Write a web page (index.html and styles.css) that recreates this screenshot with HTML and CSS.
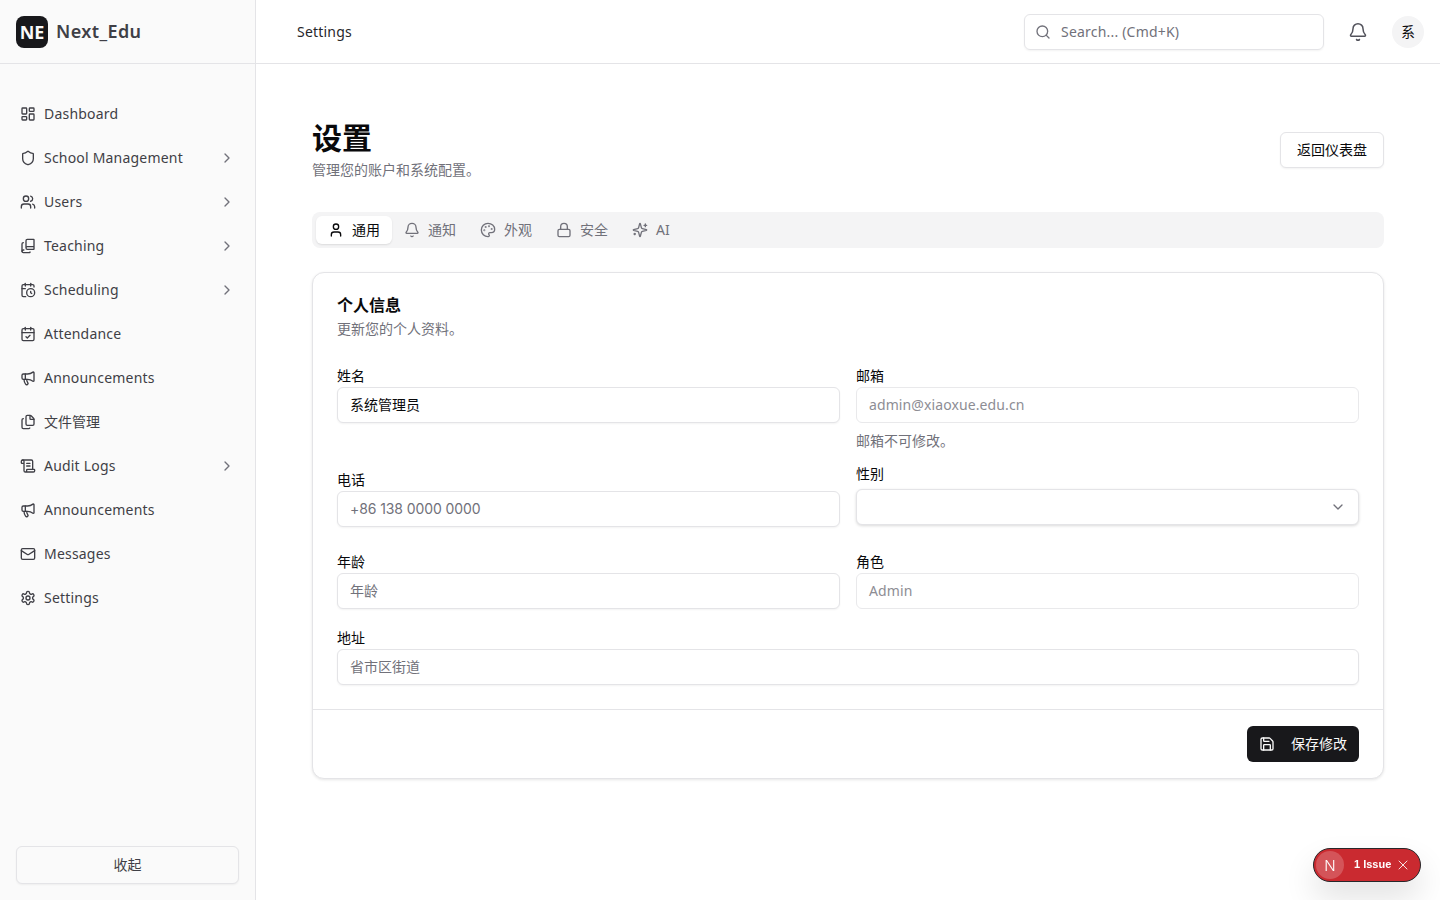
FILE: index.html
```html
<!DOCTYPE html>
<html lang="zh-CN">
<head>
<meta charset="utf-8">
<title>Settings</title>
<link rel="stylesheet" href="styles.css">
</head>
<body>
<svg class="defs" aria-hidden="true">
  <symbol id="i-dash" viewBox="0 0 24 24"><rect x="3" y="3" width="7" height="9" rx="1"/><rect x="14" y="3" width="7" height="5" rx="1"/><rect x="14" y="12" width="7" height="9" rx="1"/><rect x="3" y="16" width="7" height="5" rx="1"/></symbol>
  <symbol id="i-shield" viewBox="0 0 24 24"><path d="M20 13c0 5-3.5 7.5-7.66 8.95a1 1 0 0 1-.67-.01C7.5 20.5 4 18 4 13V6a1 1 0 0 1 1-1c2 0 4.5-1.2 6.24-2.72a1.17 1.17 0 0 1 1.52 0C14.51 3.81 17 5 19 5a1 1 0 0 1 1 1z"/></symbol>
  <symbol id="i-users" viewBox="0 0 24 24"><path d="M16 21v-2a4 4 0 0 0-4-4H6a4 4 0 0 0-4 4v2"/><circle cx="9" cy="7" r="4"/><path d="M22 21v-2a4 4 0 0 0-3-3.87"/><path d="M16 3.13a4 4 0 0 1 0 7.75"/></symbol>
  <symbol id="i-book" viewBox="0 0 24 24"><path d="M5 7a2 2 0 0 0-2 2v11"/><path d="M5.803 18H5a2 2 0 0 0 0 4h9.5a.5.5 0 0 0 .5-.5V21"/><path d="M9 15V4a2 2 0 0 1 2-2h9.5a.5.5 0 0 1 .5.5v14a.5.5 0 0 1-.5.5H11a2 2 0 0 1 0-4h10"/></symbol>
  <symbol id="i-calclock" viewBox="0 0 24 24"><path d="M16 14v2.2l1.6 1"/><path d="M16 2v4"/><path d="M21 7.5V6a2 2 0 0 0-2-2H5a2 2 0 0 0-2 2v14a2 2 0 0 0 2 2h3.5"/><path d="M3 10h5"/><path d="M8 2v4"/><circle cx="16" cy="16" r="6"/></symbol>
  <symbol id="i-calcheck" viewBox="0 0 24 24"><path d="M8 2v4"/><path d="M16 2v4"/><rect x="3" y="4" width="18" height="18" rx="2"/><path d="M3 10h18"/><path d="m9 16 2 2 4-4"/></symbol>
  <symbol id="i-mega" viewBox="0 0 24 24"><path d="M11 6a13 13 0 0 0 8.4-2.8A1 1 0 0 1 21 4v12a1 1 0 0 1-1.6.8A13 13 0 0 0 11 14H5a2 2 0 0 1-2-2V8a2 2 0 0 1 2-2z"/><path d="M6 14a12 12 0 0 0 2.4 7.2 2 2 0 0 0 3.2-2.4A8 8 0 0 1 10 14"/><path d="M8 6v8"/></symbol>
  <symbol id="i-files" viewBox="0 0 24 24"><path d="M15 2h-4a2 2 0 0 0-2 2v11a2 2 0 0 0 2 2h8a2 2 0 0 0 2-2V8"/><path d="M16.706 2.706A2.4 2.4 0 0 0 15 2v5a1 1 0 0 0 1 1h5a2.4 2.4 0 0 0-.706-1.706z"/><path d="M5 7a2 2 0 0 0-2 2v11a2 2 0 0 0 2 2h8a2 2 0 0 0 1.732-1"/></symbol>
  <symbol id="i-scroll" viewBox="0 0 24 24"><path d="M15 12h-5"/><path d="M15 8h-5"/><path d="M19 17V5a2 2 0 0 0-2-2H4"/><path d="M8 21h12a2 2 0 0 0 2-2v-1a1 1 0 0 0-1-1H11a1 1 0 0 0-1 1v1a2 2 0 1 1-4 0V5a2 2 0 1 0-4 0v2a1 1 0 0 0 1 1h3"/></symbol>
  <symbol id="i-mail" viewBox="0 0 24 24"><path d="m22 7-8.991 5.727a2 2 0 0 1-2.009 0L2 7"/><rect x="2" y="4" width="20" height="16" rx="2"/></symbol>
  <symbol id="i-gear" viewBox="0 0 24 24"><path d="M12.22 2h-.44a2 2 0 0 0-2 2v.18a2 2 0 0 1-1 1.73l-.43.25a2 2 0 0 1-2 0l-.15-.08a2 2 0 0 0-2.73.73l-.22.38a2 2 0 0 0 .73 2.73l.15.1a2 2 0 0 1 1 1.72v.51a2 2 0 0 1-1 1.74l-.15.09a2 2 0 0 0-.73 2.73l.22.38a2 2 0 0 0 2.73.73l.15-.08a2 2 0 0 1 2 0l.43.25a2 2 0 0 1 1 1.73V20a2 2 0 0 0 2 2h.44a2 2 0 0 0 2-2v-.18a2 2 0 0 1 1-1.73l.43-.25a2 2 0 0 1 2 0l.15.08a2 2 0 0 0 2.73-.73l.22-.39a2 2 0 0 0-.73-2.73l-.15-.08a2 2 0 0 1-1-1.74v-.5a2 2 0 0 1 1-1.74l.15-.09a2 2 0 0 0 .73-2.73l-.22-.38a2 2 0 0 0-2.73-.73l-.15.08a2 2 0 0 1-2 0l-.43-.25a2 2 0 0 1-1-1.73V4a2 2 0 0 0-2-2z"/><circle cx="12" cy="12" r="3"/></symbol>
  <symbol id="i-chev" viewBox="0 0 24 24"><path d="m9 18 6-6-6-6"/></symbol>
  <symbol id="i-down" viewBox="0 0 24 24"><path d="m6 9 6 6 6-6"/></symbol>
  <symbol id="i-search" viewBox="0 0 24 24"><path d="m21 21-4.34-4.34"/><circle cx="11" cy="11" r="8"/></symbol>
  <symbol id="i-bell" viewBox="0 0 24 24"><path d="M10.268 21a2 2 0 0 0 3.464 0"/><path d="M3.262 15.326A1 1 0 0 0 4 17h16a1 1 0 0 0 .74-1.673C19.41 13.956 18 12.499 18 8A6 6 0 0 0 6 8c0 4.499-1.411 5.956-2.738 7.326"/></symbol>
  <symbol id="i-user" viewBox="0 0 24 24"><path d="M19 21v-2a4 4 0 0 0-4-4H9a4 4 0 0 0-4 4v2"/><circle cx="12" cy="7" r="4"/></symbol>
  <symbol id="i-palette" viewBox="0 0 24 24"><path d="M12 22a1 1 0 0 1 0-20 10 9 0 0 1 10 9 5 5 0 0 1-5 5h-2.25a1.75 1.75 0 0 0-1.4 2.8l.3.4a1.75 1.75 0 0 1-1.4 2.8z"/><circle cx="13.5" cy="6.5" r=".5"/><circle cx="17.5" cy="10.5" r=".5"/><circle cx="6.5" cy="12.5" r=".5"/><circle cx="8.5" cy="7.5" r=".5"/></symbol>
  <symbol id="i-lock" viewBox="0 0 24 24"><rect x="3" y="11" width="18" height="11" rx="2"/><path d="M7 11V7a5 5 0 0 1 10 0v4"/></symbol>
  <symbol id="i-spark" viewBox="0 0 24 24"><path d="M9.937 15.5A2 2 0 0 0 8.5 14.063l-6.135-1.582a.5.5 0 0 1 0-.962L8.5 9.936A2 2 0 0 0 9.937 8.5l1.582-6.135a.5.5 0 0 1 .963 0L14.063 8.5A2 2 0 0 0 15.5 9.937l6.135 1.581a.5.5 0 0 1 0 .964L15.5 14.063a2 2 0 0 0-1.437 1.437l-1.582 6.135a.5.5 0 0 1-.963 0z"/><path d="M20 3v4"/><path d="M22 5h-4"/><path d="M4 17v2"/><path d="M5 18H3"/></symbol>
  <symbol id="i-save" viewBox="0 0 24 24"><path d="M15.2 3a2 2 0 0 1 1.4.6l3.8 3.8a2 2 0 0 1 .6 1.4V19a2 2 0 0 1-2 2H5a2 2 0 0 1-2-2V5a2 2 0 0 1 2-2z"/><path d="M17 21v-7a1 1 0 0 0-1-1H8a1 1 0 0 0-1 1v7"/><path d="M7 3v4a1 1 0 0 0 1 1h7"/></symbol>
  <symbol id="i-x" viewBox="0 0 24 24"><path d="M18 6 6 18"/><path d="m6 6 12 12"/></symbol>
</svg>

<div class="app">
  <aside class="sidebar">
    <div class="brand">
      <span class="logo">NE</span>
      <span class="brand-name">Next_Edu</span>
    </div>
    <nav class="nav">
      <a class="nav-item"><svg class="ico"><use href="#i-dash"/></svg><span class="nav-label">Dashboard</span></a>
      <a class="nav-item"><svg class="ico"><use href="#i-shield"/></svg><span class="nav-label">School Management</span><svg class="ico chev"><use href="#i-chev"/></svg></a>
      <a class="nav-item"><svg class="ico"><use href="#i-users"/></svg><span class="nav-label">Users</span><svg class="ico chev"><use href="#i-chev"/></svg></a>
      <a class="nav-item"><svg class="ico"><use href="#i-book"/></svg><span class="nav-label">Teaching</span><svg class="ico chev"><use href="#i-chev"/></svg></a>
      <a class="nav-item"><svg class="ico"><use href="#i-calclock"/></svg><span class="nav-label">Scheduling</span><svg class="ico chev"><use href="#i-chev"/></svg></a>
      <a class="nav-item"><svg class="ico"><use href="#i-calcheck"/></svg><span class="nav-label">Attendance</span></a>
      <a class="nav-item"><svg class="ico"><use href="#i-mega"/></svg><span class="nav-label">Announcements</span></a>
      <a class="nav-item"><svg class="ico"><use href="#i-files"/></svg><span class="nav-label nav-cjk">文件管理</span></a>
      <a class="nav-item"><svg class="ico"><use href="#i-scroll"/></svg><span class="nav-label">Audit Logs</span><svg class="ico chev"><use href="#i-chev"/></svg></a>
      <a class="nav-item"><svg class="ico"><use href="#i-mega"/></svg><span class="nav-label">Announcements</span></a>
      <a class="nav-item"><svg class="ico"><use href="#i-mail"/></svg><span class="nav-label">Messages</span></a>
      <a class="nav-item"><svg class="ico"><use href="#i-gear"/></svg><span class="nav-label">Settings</span></a>
    </nav>
    <div class="side-foot"><button class="collapse">收起</button></div>
  </aside>

  <div class="content">
    <header class="topbar">
      <div class="crumb">Settings</div>
      <div class="top-actions">
        <div class="search"><svg class="ico"><use href="#i-search"/></svg><span>Search... (Cmd+K)</span></div>
        <svg class="ico bell"><use href="#i-bell"/></svg>
        <span class="avatar">系</span>
      </div>
    </header>

    <main class="main">
      <div class="page-head">
        <div>
          <h1>设置</h1>
          <p class="muted sub">管理您的账户和系统配置。</p>
        </div>
        <button class="btn-outline">返回仪表盘</button>
      </div>

      <div class="tabs">
        <div class="tab active"><svg class="ico"><use href="#i-user"/></svg>通用</div>
        <div class="tab"><svg class="ico"><use href="#i-bell"/></svg>通知</div>
        <div class="tab"><svg class="ico"><use href="#i-palette"/></svg>外观</div>
        <div class="tab"><svg class="ico"><use href="#i-lock"/></svg>安全</div>
        <div class="tab"><svg class="ico"><use href="#i-spark"/></svg>AI</div>
      </div>

      <section class="card">
        <div class="card-head">
          <h2>个人信息</h2>
          <p class="muted card-sub">更新您的个人资料。</p>
        </div>
        <div class="form">
          <div class="field row-1">
            <label>姓名</label>
            <div class="input value">系统管理员</div>
          </div>
          <div class="field row-1">
            <label>邮箱</label>
            <div class="input disabled">admin@xiaoxue.edu.cn</div>
            <p class="muted hint">邮箱不可修改。</p>
          </div>
          <div class="field phone">
            <label>电话</label>
            <div class="input ph tel">+86 138 0000 0000</div>
          </div>
          <div class="field gender">
            <label>性别</label>
            <div class="input select"><svg class="ico"><use href="#i-down"/></svg></div>
          </div>
          <div class="field row-3">
            <label>年龄</label>
            <div class="input ph">年龄</div>
          </div>
          <div class="field row-3">
            <label>角色</label>
            <div class="input disabled">Admin</div>
          </div>
          <div class="field wide">
            <label>地址</label>
            <div class="input ph">省市区街道</div>
          </div>
        </div>
        <div class="card-foot">
          <button class="btn-dark"><svg class="ico"><use href="#i-save"/></svg><span class="btn-text">保存修改</span></button>
        </div>
      </section>
    </main>
  </div>
</div>

<div class="issue">
  <span class="issue-n">N</span>
  <span class="issue-text">1 Issue</span>
  <svg class="ico"><use href="#i-x"/></svg>
</div>
</body>
</html>
```

FILE: styles.css
```css
* { box-sizing: border-box; }
html, body { margin: 0; height: 100%; }
body {
  font-family: "Noto Sans", "Noto Sans CJK SC", sans-serif;
  font-size: 14px;
  color: #09090b;
  background: #fff;
  overflow: hidden;
}
.defs { display: none; }
.ico {
  width: 16px;
  height: 16px;
  flex: none;
  fill: none;
  stroke: currentColor;
  stroke-width: 2;
  stroke-linecap: round;
  stroke-linejoin: round;
}
.app { display: flex; height: 900px; }

/* Sidebar */
.sidebar {
  width: 256px;
  flex: none;
  display: flex;
  flex-direction: column;
  background: #fafafa;
  border-right: 1px solid #e4e4e7;
}
.brand {
  height: 64px;
  flex: none;
  display: flex;
  align-items: center;
  gap: 8px;
  padding: 0 16px;
  border-bottom: 1px solid #e4e4e7;
}
.logo {
  width: 32px;
  height: 32px;
  border-radius: 8px;
  background: #18181b;
  color: #fafafa;
  display: flex;
  align-items: center;
  justify-content: center;
  font-weight: 700;
  font-size: 18px;
  line-height: 1;
}
.brand-name { font-size: 18px; font-weight: 600; letter-spacing: .4px; color: #3f3f46; line-height: 28px; padding-bottom: 2px; }
.nav { flex: 1; display: flex; flex-direction: column; padding: 28px 16px 0; }
.nav-item {
  height: 44px;
  display: flex;
  align-items: center;
  gap: 8px;
  padding: 0 4px;
  color: #3f3f46;
  line-height: 20px;
}
.nav-label { flex: 1; letter-spacing: .2px; }
.nav-cjk { letter-spacing: 0; }
.chev { color: #71717a; }
.side-foot { padding: 0 16px 16px; }
.collapse {
  width: 223px;
  height: 38px;
  display: block;
  padding: 0 0 2px;
  background: #fafafa;
  border: 1px solid #e4e4e7;
  border-radius: 6px;
  font: inherit;
  color: #3f3f46;
  box-shadow: 0 1px 2px rgba(0,0,0,.05);
}

/* Top bar */
.content { flex: 1; min-width: 0; display: flex; flex-direction: column; }
.topbar {
  height: 64px;
  flex: none;
  display: flex;
  align-items: center;
  justify-content: space-between;
  padding: 0 16px 0 41px;
  border-bottom: 1px solid #e4e4e7;
}
.crumb { color: #27272a; letter-spacing: .2px; }
.top-actions { display: flex; align-items: center; }
.search {
  width: 300px;
  height: 36px;
  display: flex;
  align-items: center;
  gap: 10px;
  padding: 0 10px;
  border: 1px solid #e4e4e7;
  border-radius: 6px;
  color: #71717a;
  letter-spacing: .2px;
  box-shadow: 0 1px 2px rgba(0,0,0,.05);
}
.bell { width: 20px; height: 20px; color: #52525b; margin: 0 24px; stroke-width: 1.8; }
.avatar {
  width: 32px;
  height: 32px;
  padding-bottom: 2px;
  border-radius: 50%;
  background: #f4f4f5;
  display: flex;
  align-items: center;
  justify-content: center;
  font-size: 14px;
}

/* Main */
.main { flex: 1; padding: 56px 56px 0; }
.page-head { display: flex; justify-content: space-between; align-items: center; margin-bottom: 32px; }
h1 { margin: 0; font-size: 30px; line-height: 36px; font-weight: 700; }
.muted { margin: 0; color: #71717a; font-size: 14px; line-height: 20px; }
.sub { margin-top: 4px; }
.btn-outline {
  width: 104px;
  height: 36px;
  padding: 0 0 2px;
  background: #fff;
  border: 1px solid #e4e4e7;
  border-radius: 6px;
  font: inherit;
  color: #09090b;
  box-shadow: 0 1px 2px rgba(0,0,0,.05);
}
.tabs {
  height: 36px;
  display: flex;
  align-items: center;
  padding: 4px;
  background: #f4f4f5;
  border-radius: 8px;
  color: #71717a;
}
.tab {
  height: 28px;
  display: flex;
  align-items: center;
  gap: 8px;
  padding: 0 12px 2px;
  border-radius: 6px;
}
.tab .ico { margin-top: 2px; }
.tab.active { background: #fff; color: #09090b; box-shadow: 0 1px 2px rgba(0,0,0,.1); }

/* Card */
.card {
  margin-top: 24px;
  border: 1px solid #e4e4e7;
  border-radius: 12px;
  background: #fff;
  box-shadow: 0 1px 3px rgba(0,0,0,.1);
}
.card-head { padding: 21px 24px 0; }
h2 { margin: 0; font-size: 16px; line-height: 22px; font-weight: 600; }
.card-sub { margin-top: 3px; }
.form {
  display: grid;
  grid-template-columns: 503px 503px;
  column-gap: 16px;
  padding: 29px 24px 24px;
}
.field { display: flex; flex-direction: column; }
.field label { font-size: 14px; line-height: 16px; color: #09090b; }
.row-1 { padding-bottom: 15px; }
.phone { justify-content: flex-end; padding-bottom: 27px; }
.gender { padding-bottom: 29px; }
.row-3 { padding-bottom: 21px; }
.wide { grid-column: 1 / -1; }
.input {
  height: 36px;
  margin-top: 3px;
  display: flex;
  align-items: center;
  padding: 0 12px 2px;
  border: 1px solid #e4e4e7;
  border-radius: 6px;
  background: #fff;
  box-shadow: 0 1px 2px rgba(0,0,0,.05);
  font-size: 14px;
}
.ph { color: #71717a; }
.tel { font-family: Inter, sans-serif; letter-spacing: -.1px; }
.disabled { color: #71717a; opacity: .8; box-shadow: none; letter-spacing: .1px; }
.select { margin-top: 7px; padding-bottom: 0; justify-content: flex-end; color: #71717a; box-shadow: 0 1px 3px rgba(0,0,0,.15); }
.hint { margin-top: 8px; }
.card-foot {
  display: flex;
  justify-content: flex-end;
  padding: 16px 24px;
  border-top: 1px solid #e4e4e7;
}
.btn-dark {
  width: 112px;
  height: 36px;
  display: flex;
  align-items: center;
  justify-content: space-between;
  padding: 0 12px;
  background: #18181b;
  color: #fafafa;
  border: 0;
  border-radius: 6px;
  font: inherit;
}
.btn-text { margin-bottom: 2px; }

/* Dev issue badge: floats over the page */
.issue {
  position: fixed;
  left: 1313px;
  top: 848px;
  width: 108px;
  height: 34px;
  display: flex;
  align-items: center;
  padding: 0 3px 0 2px;
  border-radius: 17px;
  background: #ca2a30;
  border: 1px solid #27272a;
  color: #fff;
  box-shadow: 0 16px 32px rgba(0,0,0,.12);
}
.issue-n {
  width: 28px;
  height: 28px;
  border-radius: 50%;
  background: rgba(255,255,255,.2);
  display: flex;
  align-items: center;
  justify-content: center;
  font-family: Inter, sans-serif;
  font-weight: 300;
  font-size: 15px;
}
.issue-text { margin: 0 0 2px 10px; font-family: "Liberation Sans", sans-serif; font-size: 11px; font-weight: 700; }
.issue .ico { width: 16px; height: 16px; margin-left: 4px; stroke-width: 1.3; }
```
